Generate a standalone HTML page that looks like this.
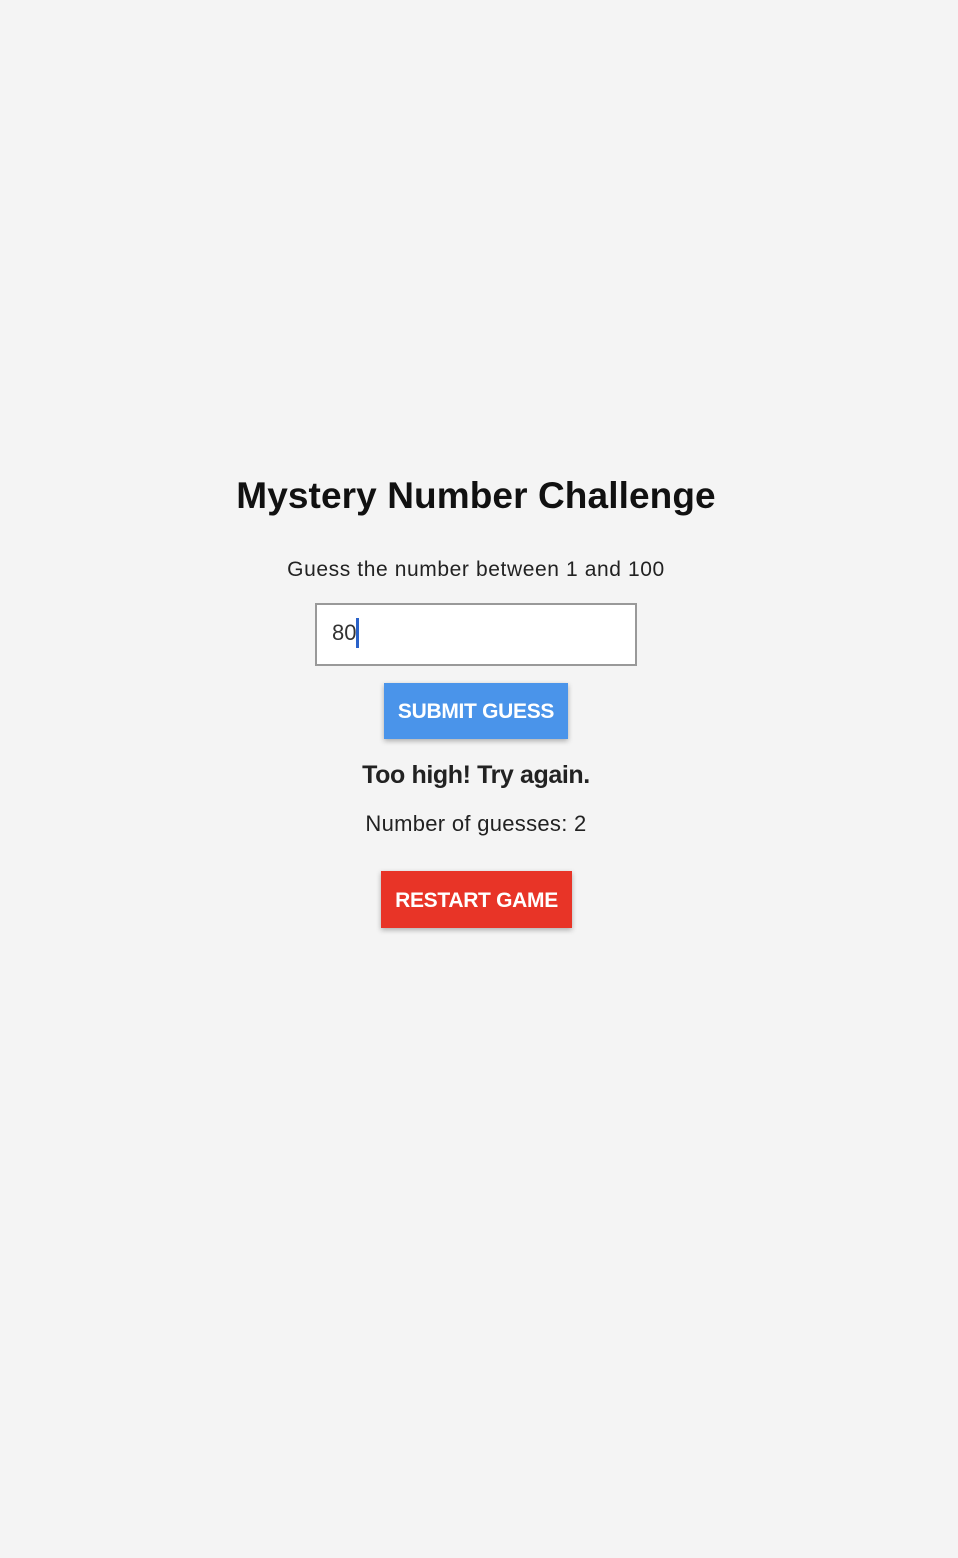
<!DOCTYPE html>
<html><head><style>
html,body{margin:0;width:958px;height:1558px;background:#f4f4f4;font-family:"Liberation Sans",sans-serif;color:#111;overflow:hidden}
.c{position:absolute;left:0;width:952px;text-align:center;white-space:nowrap}
</style></head><body>
<div class="c" style="top:475px;font-size:37px;font-weight:bold;letter-spacing:0.1px">Mystery Number Challenge</div>
<div class="c" style="top:558px;font-size:21px;color:#222;letter-spacing:0.6px">Guess the number between 1 and 100</div>
<div style="position:absolute;left:315px;top:603px;width:318px;height:59px;border:2px solid #999;background:#fff"></div>
<div style="position:absolute;left:332px;top:620px;font-size:22px;color:#333">80</div>
<div style="position:absolute;left:356px;top:618px;width:3px;height:30px;background:#2a62c9"></div>
<div style="position:absolute;left:384px;top:683px;width:184px;height:56px;background:#4a94ea;box-shadow:0 2px 5px rgba(0,0,0,.3);color:#fff;font-size:21px;font-weight:bold;text-align:center;line-height:58px;letter-spacing:-0.3px">SUBMIT GUESS</div>
<div class="c" style="top:761px;font-size:25px;color:#222;letter-spacing:-0.4px;font-weight:600">Too high! Try again.</div>
<div class="c" style="top:811px;font-size:22px;color:#222;letter-spacing:0.3px">Number of guesses: 2</div>
<div style="position:absolute;left:381px;top:871px;width:191px;height:57px;background:#e83427;box-shadow:0 2px 5px rgba(0,0,0,.3);color:#fff;font-size:21px;font-weight:bold;text-align:center;line-height:59px;letter-spacing:-0.3px">RESTART GAME</div>
</body></html>
